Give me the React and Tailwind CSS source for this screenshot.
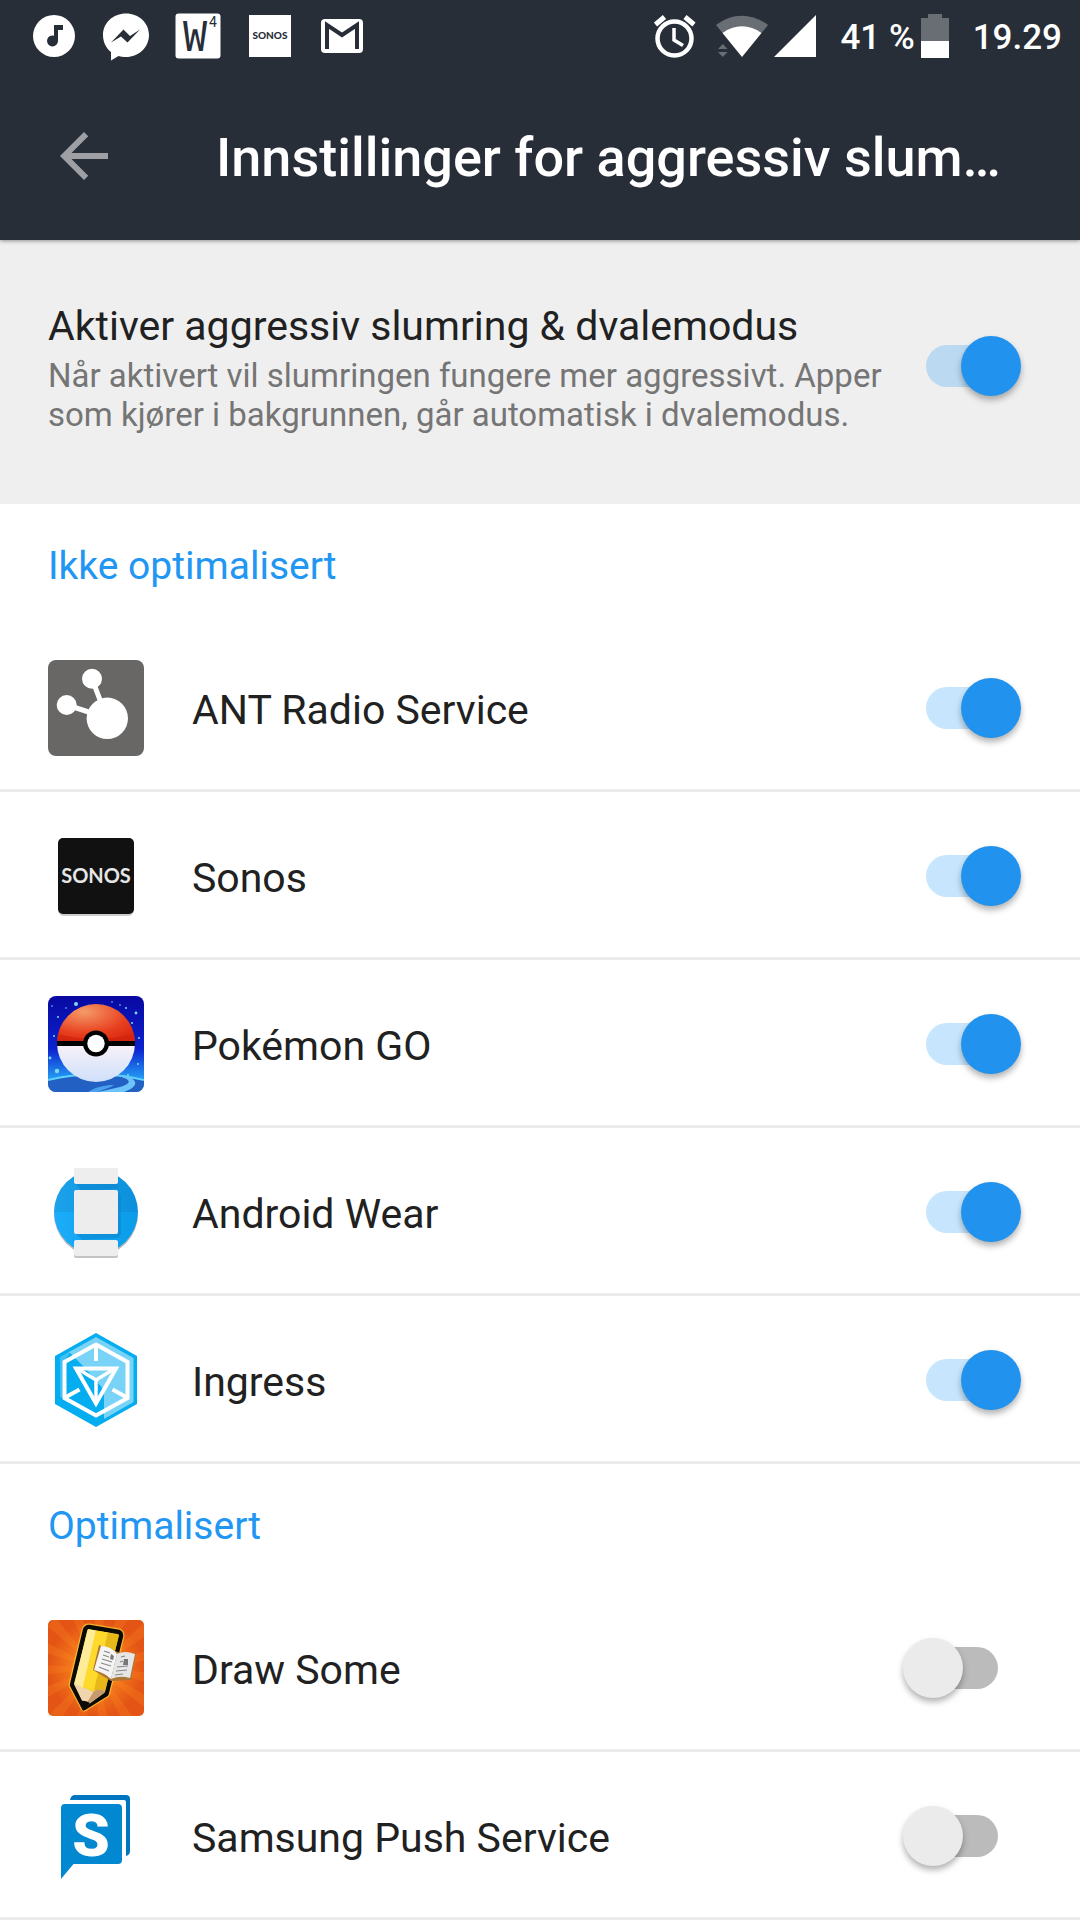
import { useState } from "react";

/* ---------- Status bar icons (72x72 slots) ---------- */

const NOTIFICATIONS = [
  {
    id: "music",
    icon: (
      <>
        <circle cx="36" cy="36" r="21" fill="#fff" />
        <path d="M36 25h9v5h-5v11a5.5 5.5 0 1 1-4-5.3z" fill="#272e38" />
      </>
    ),
  },
  {
    id: "messenger",
    icon: (
      <>
        <path d="M36 13.500c13 0 23 9.500 23 21.500S49 57 36 57c-3 0-5-.3-7.500-1L21 60.500V52c-5-4-8-10-8-17 0-12 10-21.500 23-21.500z" fill="#fff" />
        <path d="M21 42.500 33.500 29.500l6.500 6.500 10-6.500L37.500 42.500 31 36.500z" fill="#272e38" />
      </>
    ),
  },
  {
    id: "wordfeud",
    icon: (
      <>
        <rect x="13.500" y="13.500" width="45" height="45" rx="3" fill="#fff" />
        <text x="21" y="51" fontFamily="DejaVu Sans Mono, monospace" fontSize="40" fill="#272e38">W</text>
        <text x="47" y="27" fontFamily="Roboto, sans-serif" fontSize="14" fill="#272e38">4</text>
      </>
    ),
  },
  {
    id: "sonos",
    icon: (
      <>
        <rect x="15" y="15" width="42" height="42" fill="#fff" />
        <text x="36" y="39" textAnchor="middle" fontFamily="Lato, sans-serif" fontWeight="900" fontSize="10" fill="#272e38">SONOS</text>
      </>
    ),
  },
  {
    id: "gmail",
    icon: (
      <>
        <rect x="15" y="19" width="42" height="34" rx="4" fill="#fff" />
        <path d="M21 49V25l15 10 15-10v24" fill="none" stroke="#272e38" strokeWidth="4" />
      </>
    ),
  },
];

function AlarmIcon() {
  return (
    <svg viewBox="0 0 42 72" className="w-[42px] h-[72px] mr-5" fill="none" stroke="#fff">
      <circle cx="20.500" cy="38.500" r="17" strokeWidth="4.500" />
      <path d="M20 28v12l9 5.500" strokeWidth="3.500" />
      <path d="M1.500 24.500 10.500 17M40 24.500 31 17" strokeWidth="5" />
    </svg>
  );
}

function WifiIcon() {
  return (
    <svg viewBox="0 0 52 72" className="w-[52px] h-[72px] mr-1.5">
      <path d="M0 25C16 12.500 36 12.500 52 25L45.500 33H6.500z" fill="#696e75" />
      <path d="M26 57 6.500 33c12-9 27-9 39 0z" fill="#fff" />
      <path d="M2 49h9.500l-4.700-5zM2 52h9.500l-4.700 5z" fill="#696e75" />
    </svg>
  );
}

function SignalIcon() {
  return (
    <svg viewBox="0 0 42 72" className="w-[42px] h-[72px] mr-6">
      <path d="M0 57 42 15v42z" fill="#fff" />
    </svg>
  );
}

function BatteryIcon() {
  return (
    <svg viewBox="0 0 28 72" className="w-7 h-[72px] ml-1.5 mr-6">
      <path d="M7 14h14v4h7v24H0V18h7z" fill="#696e75" />
      <path d="M0 41h28v17H0z" fill="#fff" />
    </svg>
  );
}

/* ---------- App icons (96x96) ---------- */

const AntIcon = (
  <>
    <rect width="96" height="96" rx="8" fill="#686765" />
    <path d="M44 19 59 58 19 45" fill="none" stroke="#fff" strokeWidth="5" />
    <circle cx="44" cy="18.700" r="10" fill="#fff" />
    <circle cx="18.700" cy="45" r="10" fill="#fff" />
    <circle cx="59.300" cy="58.300" r="20.700" fill="#fff" />
  </>
);

const SonosIcon = (
  <>
    <rect x="10" y="12" width="76" height="76" rx="6" fill="#ccc" />
    <rect x="10" y="10" width="76" height="76" rx="5" fill="#111" />
    <text x="48" y="55" textAnchor="middle" fontFamily="Lato, sans-serif" fontWeight="700" fontSize="20" fill="#e6e6e6">SONOS</text>
  </>
);

const STARS = [
  [28, 8, 2], [10, 21, 1], [88, 17, 1.4], [78, 12, 1], [9, 75, 2.2], [2, 62, 1.4], [6, 40, 1], [91, 42, 1],
  [18, 12, 0.8], [84, 27, 1], [90, 68, 1], [64, 6, 0.8], [12, 52, 0.8], [80, 79, 1], [72, 9, 0.8], [4, 10, 0.8],
];

const PokemonIcon = (
  <>
    <defs>
      <clipPath id="pkClip"><rect width="96" height="96" rx="8" /></clipPath>
      <linearGradient id="pkSky" x2="0" y2="1">
        <stop offset="0" stopColor="#0808a0" />
        <stop offset=".55" stopColor="#0b22cf" />
        <stop offset=".85" stopColor="#2497f2" />
      </linearGradient>
      <radialGradient id="pkRed" cx=".35" cy=".2" r=".8">
        <stop offset="0" stopColor="#f59a68" />
        <stop offset=".7" stopColor="#e8401f" />
        <stop offset="1" stopColor="#dc2c12" />
      </radialGradient>
      <linearGradient id="pkWhite" x2="0" y2="1">
        <stop offset="0" stopColor="#faf2f8" />
        <stop offset="1" stopColor="#cfe0fb" />
      </linearGradient>
    </defs>
    <g clipPath="url(#pkClip)">
      <rect width="96" height="96" fill="url(#pkSky)" />
      {STARS.map(([cx, cy, r]) => (
        <circle key={cx + "-" + cy} cx={cx} cy={cy} r={r} fill="#7fd8f5" />
      ))}
      <path d="M0 84Q48 73 96 84V96H0z" fill="#2360c4" />
      <path d="M0 84Q48 73 96 84" fill="none" stroke="#5ed2fb" strokeWidth="2" />
      <path d="M70 80c16 4 12 8 2 11l-22 5h26c14-5 16-12 0-17z" fill="#6cc4fb" />
      <path d="M40 96c8-5 16-7 26-7-4 3-10 4-16 7z" fill="#4ba0ee" />
      <path d="M9 47a39 39 0 0 0 78 0z" fill="url(#pkWhite)" />
      <path d="M9 47a39 39 0 0 1 78 0z" fill="url(#pkRed)" />
      <path d="M10 38q38 10 76 0l1 9H9z" fill="#cf220c" opacity=".7" />
      <path d="M9 45h78v5H9z" fill="#000" />
      <circle cx="48" cy="47.500" r="13" fill="#000" />
      <circle cx="48" cy="47.500" r="8.700" fill="#fff" />
    </g>
  </>
);

const WearIcon = (
  <>
    <defs>
      <linearGradient id="wrTop"><stop stopColor="#1ba2e9" /><stop offset="1" stopColor="#0d90dc" /></linearGradient>
      <linearGradient id="wrBottom"><stop stopColor="#1badf9" /><stop offset="1" stopColor="#0a9ce9" /></linearGradient>
    </defs>
    <path d="M6 50a42 42 0 0 0 84 0z" fill="#bbb" />
    <path d="M6 48a42 42 0 0 1 84 0z" fill="url(#wrTop)" />
    <path d="M6 48a42 42 0 0 0 84 0z" fill="url(#wrBottom)" />
    <path d="M28 20h42v4l-36 4zM70 28l3 4v38l-3 4-36 2-8-8z" fill="#0b84cc" opacity=".55" />
    <rect x="26" y="78" width="44" height="16" rx="2" fill="#c4c4c4" />
    <rect x="26" y="4" width="44" height="16" rx="2" fill="#eee" />
    <rect x="26" y="26" width="44" height="44" rx="2" fill="#ededed" />
    <rect x="26" y="76" width="44" height="16" rx="2" fill="#eee" />
  </>
);

const IngressIcon = (
  <>
    <path d="M48 1 89 24v48L48 95 7 72V24z" fill="#03adef" />
    <path d="M48 5 85.500 26v44L56 87V58L38 37 21 20z" fill="#79d3f6" />
    <path d="M12 25 24 18l-8 12v36l-4-1z" fill="#79d3f6" opacity=".5" />
    <g fill="none" stroke="#fff" strokeWidth="4">
      <path d="M48 12.500 79.500 30v36L48 83.500 16.500 66V30z" />
      <path d="M48 12v17M17 65.500l14.500-8M79 65.500l-14.500-8" />
      <path d="M28 36.500h40L48 71.500z" />
      <path d="M48 71V48L30 37M48 48l18-11" strokeWidth="3.500" />
    </g>
  </>
);

const RAYS = [10, 34, 58, 82, 106, 130, 154, 178, 202, 226, 250, 274, 298, 322, 346];

const DrawIcon = (
  <>
    <defs>
      <clipPath id="drClip"><rect width="96" height="96" rx="5" /></clipPath>
      <radialGradient id="drBg">
        <stop offset="0" stopColor="#ffc02e" />
        <stop offset=".55" stopColor="#f2741a" />
        <stop offset="1" stopColor="#e35415" />
      </radialGradient>
    </defs>
    <g clipPath="url(#drClip)">
      <rect width="96" height="96" fill="url(#drBg)" />
      {RAYS.map((a) => (
        <path key={a} d="M48 48 112 42v12z" transform={`rotate(${a} 48 48)`} fill="#ff8c1e" opacity=".25" />
      ))}
    </g>
    <path d="M41 7 71 12q2 1 2 4L58.500 74 36 88 24 65 37 10q1-3 4-3z" fill="#fbd62d" stroke="#ffd23e" strokeWidth="7" strokeLinejoin="round" opacity=".7" />
    <path d="M41 7 71 12q2 1 2 4L58.500 74 36 88 24 65 37 10q1-3 4-3z" fill="#f8d32a" stroke="#0c0a05" strokeWidth="4.500" strokeLinejoin="round" />
    <path d="M40 9l8 1.500L35 68l-9-4z" fill="#ffec9a" />
    <path d="M48 10.500 60 12.500 46 70l-11-3z" fill="#ffd92c" />
    <path d="M60 12.500 71 15 57 72l-11-2z" fill="#e8b818" />
    <path d="M26 64q4 0 8 4 6 0 10 4 7-4 13-1l-1 2-19 14z" fill="#f0d5ae" />
    <path d="M46 71q6-3 11-0l-1 2-19 13z" fill="#c79b6b" />
    <path d="M32 81q5-1 10 2l-7 8z" fill="#0c0a05" />
    <path d="M51 25 45 50l18 11 20-1 5-26-18-2z" fill="#ad7735" />
    <path d="M53 26q10 0 16 8l-6 25q-6-6-17-9z" fill="#f4f4f4" />
    <path d="M69 34q7-4 18 0l-5 24q-10-3-19 1z" fill="#e6e6e6" />
    <path d="M56 31l6 2M55 35l6 2M54 39l10 3M53 43l10 3M51 47l10 4M73 37l4-1M72 42l3-1M69 47l11-1M68 51l11-1M67 55l8-1" stroke="#888" strokeWidth="1.200" />
    <path d="M76 39h4v6h-5zM63 34l3 2-1 4-3-1z" fill="#777" />
  </>
);

const SamsungIcon = (
  <>
    <path d="M22 12q1-5 5-5h51q4 0 4 4v52q0 4-4 5V14q0-2-2-2z" fill="#0075c0" />
    <path d="M17 16h53q4 0 4 4v52q0 4-4 4H25.500L13 91V20q0-4 4-4z" fill="#0288d1" />
    <text x="43" y="68" textAnchor="middle" fontFamily="Roboto, sans-serif" fontWeight="900" fontSize="60" fill="#fff">S</text>
  </>
);

const SECTIONS = [
  {
    title: "Ikke optimalisert",
    apps: [
      { id: "ant", name: "ANT Radio Service", icon: AntIcon },
      { id: "sonos", name: "Sonos", icon: SonosIcon },
      { id: "pokemon", name: "Pokémon GO", icon: PokemonIcon },
      { id: "wear", name: "Android Wear", icon: WearIcon },
      { id: "ingress", name: "Ingress", icon: IngressIcon },
    ],
  },
  {
    title: "Optimalisert",
    apps: [
      { id: "draw", name: "Draw Some", icon: DrawIcon },
      { id: "push", name: "Samsung Push Service", icon: SamsungIcon },
    ],
  },
];

function Switch({ id, checked, onChange }) {
  return (
    <span className="relative flex items-center justify-center w-[120px] h-[60px] shrink-0">
      <input
        id={id}
        type="checkbox"
        role="switch"
        checked={checked}
        onChange={onChange}
        className="peer appearance-none w-[72px] h-[42px] rounded-full bg-[#bbbbbb] checked:bg-[#2196f3]/25 cursor-pointer outline-none"
      />
      <span className="absolute left-px top-0 size-[60px] rounded-full bg-[#ebebeb] shadow-[0_4px_6px_rgba(0,0,0,0.3)] peer-checked:left-[59px] peer-checked:bg-[#2193ef] pointer-events-none" />
    </span>
  );
}

export default function App() {
  const [enabled, setEnabled] = useState({
    doze: true,
    ant: true,
    sonos: true,
    pokemon: true,
    wear: true,
    ingress: true,
    draw: false,
    push: false,
  });

  const toggle = (id) => setEnabled((prev) => ({ ...prev, [id]: !prev[id] }));

  return (
    <div className="min-h-screen bg-white font-[Roboto,sans-serif] text-[#212121]">
      <header className="relative bg-[#272e38] text-white shadow-[0_1px_4px_rgba(0,0,0,0.4)]">
        {/* Status bar */}
        <div className="flex items-center justify-between h-[72px] px-[18px]">
          <div className="flex">
            {NOTIFICATIONS.map((n) => (
              <svg key={n.id} viewBox="0 0 72 72" className="size-[72px]">
                {n.icon}
              </svg>
            ))}
          </div>
          <div className="flex items-center text-[35px] leading-[48px] font-medium">
            <AlarmIcon />
            <WifiIcon />
            <SignalIcon />
            <span className="pt-1">41 %</span>
            <BatteryIcon />
            <span className="pt-1">19.29</span>
          </div>
        </div>

        {/* App bar */}
        <div className="flex items-center h-[168px] pl-12 pr-[72px]">
          <button aria-label="Tilbake" className="mr-24 shrink-0 cursor-pointer">
            <svg viewBox="0 0 24 24" className="size-[72px]" fill="#9d9fa5">
              <path d="M20 11H7.830l5.590-5.590L12 4l-8 8 8 8 1.410-1.410L7.830 13H20z" />
            </svg>
          </button>
          <h1 className="flex-1 min-w-0 truncate pt-1 text-[54px] leading-[72px] font-medium">
            Innstillinger for aggressiv slum…
          </h1>
        </div>
      </header>

      <main>
        <section className="flex items-center justify-between h-[264px] pl-12 pr-[58px] pb-3 bg-[#efefef]">
          <label htmlFor="doze" className="max-w-[860px] pt-1 cursor-pointer">
            <span className="block text-[41px] leading-[48px]">Aktiver aggressiv slumring &amp; dvalemodus</span>
            <span className="block mt-1.5 text-[33px] leading-[39px] text-[#757575]">
              Når aktivert vil slumringen fungere mer aggressivt. Apper som kjører i bakgrunnen, går automatisk i dvalemodus.
            </span>
          </label>
          <Switch id="doze" checked={enabled.doze} onChange={() => toggle("doze")} />
        </section>

        {SECTIONS.map((section) => (
          <section key={section.title}>
            <h2 className="flex items-center h-[120px] px-12 pt-1 text-[39px] leading-[48px] text-[#2196f3]">{section.title}</h2>
            <ul>
              {section.apps.map((app) => (
                <li
                  key={app.id}
                  className="flex items-center h-[168px] pt-[3px] pl-12 pr-[58px] border-b-[3px] border-[#ebebeb]"
                >
                  <svg viewBox="0 0 96 96" className="size-24 mr-12 shrink-0">
                    {app.icon}
                  </svg>
                  <label htmlFor={app.id} className="flex-1 pt-1 text-[41px] leading-[48px] cursor-pointer">
                    {app.name}
                  </label>
                  <Switch id={app.id} checked={enabled[app.id]} onChange={() => toggle(app.id)} />
                </li>
              ))}
            </ul>
          </section>
        ))}
      </main>
    </div>
  );
}
